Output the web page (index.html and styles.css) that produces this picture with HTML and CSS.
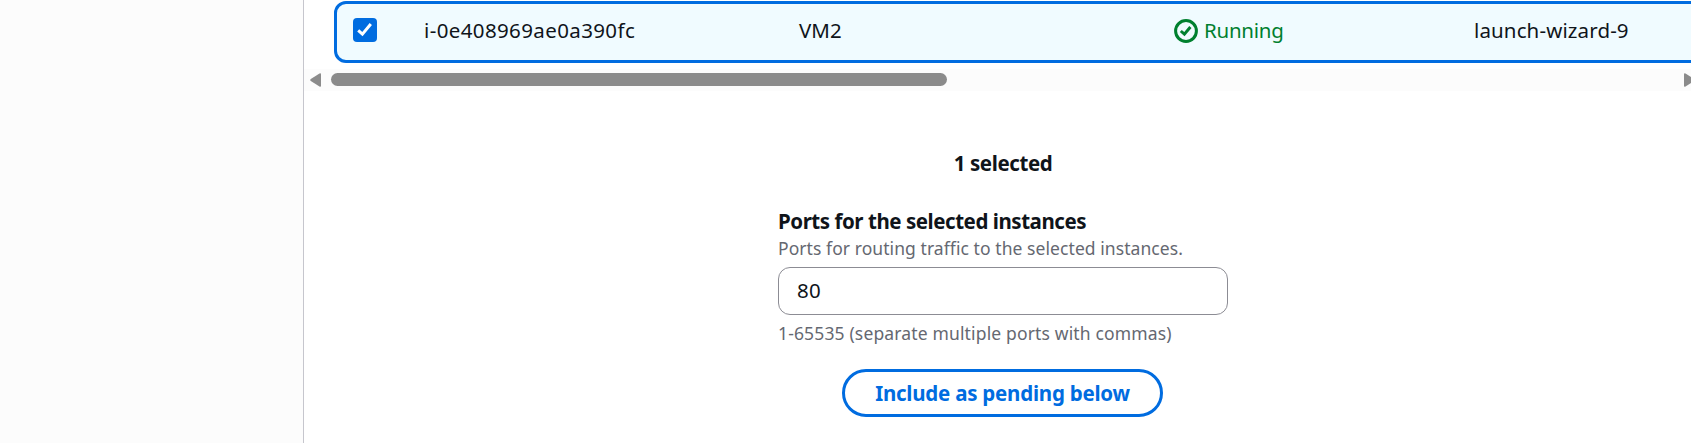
FILE: index.html
```html
<!DOCTYPE html>
<html lang="en">
<head>
<meta charset="utf-8">
<title>Register targets</title>
<link rel="stylesheet" href="styles.css">
</head>
<body>
<div class="layout">
  <aside class="sidebar"></aside>
  <main class="content">
    <div class="row">
      <div class="cell cell-check">
        <svg class="checkbox" viewBox="0 0 24 24"><rect width="24" height="24" rx="4" fill="#006ce0"/><path d="M5.2 12.4l4.2 3.8L17.8 6" fill="none" stroke="#fff" stroke-width="3"/></svg>
      </div>
      <div class="cell cell-id"><span class="t-id">i-0e408969ae0a390fc</span></div>
      <div class="cell cell-name"><span class="t-name">VM2</span></div>
      <div class="cell cell-state">
        <svg class="status" viewBox="0 0 24 24" fill="none" stroke="#00802f" stroke-width="3"><circle cx="12" cy="12" r="10.4"/><path d="M6.8 12l3.6 3.2 6-7.2"/></svg>
        <span class="t-state">Running</span>
      </div>
      <div class="cell cell-group"><span class="t-group">launch-wizard-9</span></div>
    </div>
    <div class="scrollbar">
      <svg class="arrow" viewBox="0 0 11 14"><path d="M11 1.2v11.6Q11 14.4 9.5 13.6L.8 8Q-.4 7 .8 6L9.5.4Q11-.4 11 1.2z" fill="#8b8b8b"/></svg>
      <div class="thumb"></div>
      <svg class="arrow" viewBox="0 0 11 14"><path d="M0 1.2v11.6Q0 14.4 1.5 13.6L10.2 8Q11.4 7 10.2 6L1.5.4Q0-.4 0 1.2z" fill="#8b8b8b"/></svg>
    </div>
    <section class="ports">
      <div class="selected"><span class="t-selected">1 selected</span></div>
      <label class="label" for="ports"><span class="t-label">Ports for the selected instances</span></label>
      <div class="description"><span class="t-desc">Ports for routing traffic to the selected instances.</span></div>
      <input class="input" id="ports" type="text" value="80">
      <div class="hint"><span class="t-hint">1-65535 (separate multiple ports with commas)</span></div>
      <button class="button" type="button"><span class="t-button">Include as pending below</span></button>
    </section>
  </main>
</div>
</body>
</html>
```
FILE: styles.css
```css
* { box-sizing: border-box; }
body {
  margin: 0;
  background: #fff;
  color: #0f141a;
  font: 20.5px/30px "Noto Sans", "Open Sans", sans-serif;
  overflow: hidden;
}
.layout { display: flex; height: 443px; overflow: hidden; }
.sidebar { flex: 0 0 304px; background: #fcfcfc; border-right: 1px solid #c6c6cd; }
.content { flex: 1; min-width: 0; overflow: hidden; }
.row {
  display: flex;
  align-items: center;
  width: 1400px;
  height: 62px;
  margin: 1px 0 0 30px;
  background: #f0fbff;
  border: 3px solid #006ce0;
  border-radius: 12px;
}
.cell { display: flex; align-items: center; flex: none; height: 30px; white-space: nowrap; margin-top: -4px; }
.cell-check { width: 87px; padding-left: 16px; }
.cell-id { width: 375px; }
.cell-name { width: 375px; }
.cell-state { width: 300px; gap: 6px; color: #00802f; }
.t-id { letter-spacing: .38px; }
.t-state { letter-spacing: -.25px; }
.t-group { letter-spacing: .13px; }
.checkbox, .status { width: 24px; height: 24px; flex: none; }
.status { position: relative; top: 1px; }
.scrollbar {
  display: flex;
  align-items: center;
  height: 22px;
  width: 1400px;
  margin-top: 6px;
  padding-left: 6px;
  background: #fcfcfc;
}
.arrow { width: 11px; height: 14px; flex: none; }
.thumb { width: 616px; height: 13px; margin: 0 737px 1px 10px; border-radius: 7px; background: #8b8b8b; flex: none; }
.ports {
  display: flex;
  flex-direction: column;
  width: 450px;
  margin: 57px 0 0 474px;
  white-space: nowrap;
}
.selected { align-self: center; font-weight: 700; height: 30px; }
.t-selected { letter-spacing: -.4px; }
.label { font-weight: 700; margin-top: 28px; height: 30px; }
.t-label { letter-spacing: -.45px; }
.description, .hint { font-size: 17.5px; line-height: 24px; color: #656871; }
.description { height: 24px; letter-spacing: .07px; }
.input {
  width: 450px;
  height: 48px;
  margin-top: 7px;
  padding: 0 18px 2px;
  border: 1px solid #8c8c94;
  border-radius: 12px;
  background: #fff;
  color: #0f141a;
  font: inherit;
  letter-spacing: .3px;
  outline: none;
}
.hint { margin-top: 6px; height: 24px; letter-spacing: .15px; }
.button {
  align-self: flex-start;
  width: 321px;
  height: 48px;
  margin: 24px 0 0 64px;
  padding: 0 0 1px;
  border: 3px solid #006ce0;
  border-radius: 24px;
  background: #fff;
  color: #006ce0;
  font: inherit;
  font-weight: 700;
  letter-spacing: -.23px;
}
```
